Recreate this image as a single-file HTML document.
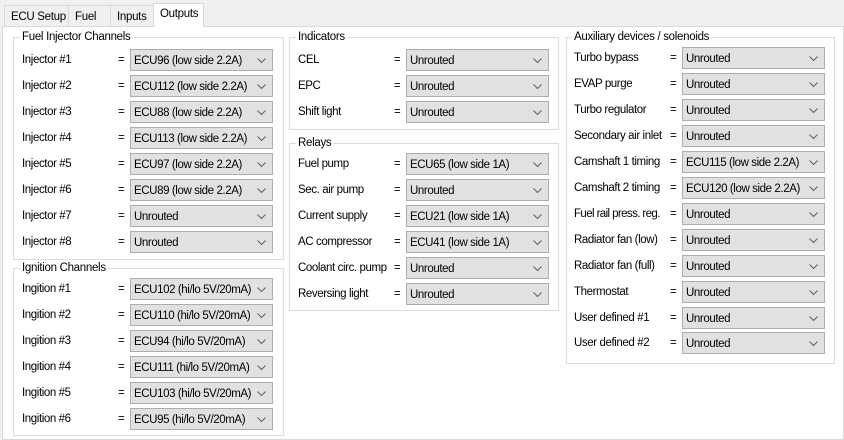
<!DOCTYPE html>
<html><head><meta charset="utf-8"><style>
*{margin:0;padding:0;box-sizing:border-box}
body{width:844px;height:440px;overflow:hidden;background:#f0f0f0;font-family:"Liberation Sans",sans-serif;font-size:11.5px;color:#000;position:relative}
.page{position:absolute;left:2px;top:26px;width:842px;height:414px;background:#fff;border:1px solid #d9d9d9}
.tab{position:absolute;top:5px;height:21px;border:1px solid #d9d9d9;border-bottom:none;background:#f0f0f0;padding:5px 0 0 6px;letter-spacing:-0.3px;white-space:nowrap}
.tab.sel{top:3px;height:24px;background:#fff;padding-top:4px}
.g{position:absolute;border:1px solid #dcdcdc}
.gt{position:absolute;background:#fff;padding:0 2px;letter-spacing:-0.3px;white-space:nowrap;margin-top:1px}
.r{position:absolute;height:22px;width:260px}
.r .l{position:absolute;left:0;top:5px;letter-spacing:-0.4px;white-space:nowrap}
.r .e{position:absolute;left:96px;top:5px}
.r .c{position:absolute;left:108px;top:0;width:143px;height:22px;background:#e1e1e1;border:1px solid #adadad;padding:5px 0 0 3px;white-space:nowrap;letter-spacing:-0.4px}
.r .c svg{position:absolute;right:6px;top:8px}
</style></head><body>
<div class="page"></div>
<div class="tab" style="left:4px;width:65px">ECU Setup</div>
<div class="tab" style="left:68px;width:43px">Fuel</div>
<div class="tab" style="left:110px;width:44px">Inputs</div>
<div class="tab sel" style="left:153px;width:51px">Outputs</div>

<div class="g" style="left:13px;top:37px;width:271px;height:223px"></div>
<div class="gt" style="left:20px;top:30px">Fuel Injector Channels</div>
<div class="g" style="left:13px;top:268px;width:271px;height:168px"></div>
<div class="gt" style="left:20px;top:261px">Ignition Channels</div>
<div class="g" style="left:289px;top:37px;width:270px;height:93px"></div>
<div class="gt" style="left:296px;top:30px">Indicators</div>
<div class="g" style="left:289px;top:143px;width:270px;height:168px"></div>
<div class="gt" style="left:296px;top:136px">Relays</div>
<div class="g" style="left:566px;top:37px;width:269px;height:327px"></div>
<div class="gt" style="left:572px;top:30px">Auxiliary devices / solenoids</div>

<div class="r" style="left:22px;top:49px"><span class="l">Injector #1</span><span class="e">=</span><div class="c">ECU96 (low side 2.2A)<svg width="9" height="6"><path d="M0.5 0.5L4.5 4.5L8.5 0.5" fill="none" stroke="#606060"/></svg></div></div>
<div class="r" style="left:22px;top:75px"><span class="l">Injector #2</span><span class="e">=</span><div class="c">ECU112 (low side 2.2A)<svg width="9" height="6"><path d="M0.5 0.5L4.5 4.5L8.5 0.5" fill="none" stroke="#606060"/></svg></div></div>
<div class="r" style="left:22px;top:101px"><span class="l">Injector #3</span><span class="e">=</span><div class="c">ECU88 (low side 2.2A)<svg width="9" height="6"><path d="M0.5 0.5L4.5 4.5L8.5 0.5" fill="none" stroke="#606060"/></svg></div></div>
<div class="r" style="left:22px;top:127px"><span class="l">Injector #4</span><span class="e">=</span><div class="c">ECU113 (low side 2.2A)<svg width="9" height="6"><path d="M0.5 0.5L4.5 4.5L8.5 0.5" fill="none" stroke="#606060"/></svg></div></div>
<div class="r" style="left:22px;top:153px"><span class="l">Injector #5</span><span class="e">=</span><div class="c">ECU97 (low side 2.2A)<svg width="9" height="6"><path d="M0.5 0.5L4.5 4.5L8.5 0.5" fill="none" stroke="#606060"/></svg></div></div>
<div class="r" style="left:22px;top:179px"><span class="l">Injector #6</span><span class="e">=</span><div class="c">ECU89 (low side 2.2A)<svg width="9" height="6"><path d="M0.5 0.5L4.5 4.5L8.5 0.5" fill="none" stroke="#606060"/></svg></div></div>
<div class="r" style="left:22px;top:205px"><span class="l">Injector #7</span><span class="e">=</span><div class="c">Unrouted<svg width="9" height="6"><path d="M0.5 0.5L4.5 4.5L8.5 0.5" fill="none" stroke="#606060"/></svg></div></div>
<div class="r" style="left:22px;top:231px"><span class="l">Injector #8</span><span class="e">=</span><div class="c">Unrouted<svg width="9" height="6"><path d="M0.5 0.5L4.5 4.5L8.5 0.5" fill="none" stroke="#606060"/></svg></div></div>

<div class="r" style="left:22px;top:278px"><span class="l">Ingition #1</span><span class="e">=</span><div class="c">ECU102 (hi/lo 5V/20mA)<svg width="9" height="6"><path d="M0.5 0.5L4.5 4.5L8.5 0.5" fill="none" stroke="#606060"/></svg></div></div>
<div class="r" style="left:22px;top:304px"><span class="l">Ingition #2</span><span class="e">=</span><div class="c">ECU110 (hi/lo 5V/20mA)<svg width="9" height="6"><path d="M0.5 0.5L4.5 4.5L8.5 0.5" fill="none" stroke="#606060"/></svg></div></div>
<div class="r" style="left:22px;top:330px"><span class="l">Ingition #3</span><span class="e">=</span><div class="c">ECU94 (hi/lo 5V/20mA)<svg width="9" height="6"><path d="M0.5 0.5L4.5 4.5L8.5 0.5" fill="none" stroke="#606060"/></svg></div></div>
<div class="r" style="left:22px;top:356px"><span class="l">Ingition #4</span><span class="e">=</span><div class="c">ECU111 (hi/lo 5V/20mA)<svg width="9" height="6"><path d="M0.5 0.5L4.5 4.5L8.5 0.5" fill="none" stroke="#606060"/></svg></div></div>
<div class="r" style="left:22px;top:382px"><span class="l">Ingition #5</span><span class="e">=</span><div class="c">ECU103 (hi/lo 5V/20mA)<svg width="9" height="6"><path d="M0.5 0.5L4.5 4.5L8.5 0.5" fill="none" stroke="#606060"/></svg></div></div>
<div class="r" style="left:22px;top:408px"><span class="l">Ingition #6</span><span class="e">=</span><div class="c">ECU95 (hi/lo 5V/20mA)<svg width="9" height="6"><path d="M0.5 0.5L4.5 4.5L8.5 0.5" fill="none" stroke="#606060"/></svg></div></div>

<div class="r" style="left:298px;top:49px"><span class="l">CEL</span><span class="e">=</span><div class="c">Unrouted<svg width="9" height="6"><path d="M0.5 0.5L4.5 4.5L8.5 0.5" fill="none" stroke="#606060"/></svg></div></div>
<div class="r" style="left:298px;top:75px"><span class="l">EPC</span><span class="e">=</span><div class="c">Unrouted<svg width="9" height="6"><path d="M0.5 0.5L4.5 4.5L8.5 0.5" fill="none" stroke="#606060"/></svg></div></div>
<div class="r" style="left:298px;top:101px"><span class="l">Shift light</span><span class="e">=</span><div class="c">Unrouted<svg width="9" height="6"><path d="M0.5 0.5L4.5 4.5L8.5 0.5" fill="none" stroke="#606060"/></svg></div></div>

<div class="r" style="left:298px;top:153px"><span class="l">Fuel pump</span><span class="e">=</span><div class="c">ECU65 (low side 1A)<svg width="9" height="6"><path d="M0.5 0.5L4.5 4.5L8.5 0.5" fill="none" stroke="#606060"/></svg></div></div>
<div class="r" style="left:298px;top:179px"><span class="l">Sec. air pump</span><span class="e">=</span><div class="c">Unrouted<svg width="9" height="6"><path d="M0.5 0.5L4.5 4.5L8.5 0.5" fill="none" stroke="#606060"/></svg></div></div>
<div class="r" style="left:298px;top:205px"><span class="l">Current supply</span><span class="e">=</span><div class="c">ECU21 (low side 1A)<svg width="9" height="6"><path d="M0.5 0.5L4.5 4.5L8.5 0.5" fill="none" stroke="#606060"/></svg></div></div>
<div class="r" style="left:298px;top:231px"><span class="l">AC compressor</span><span class="e">=</span><div class="c">ECU41 (low side 1A)<svg width="9" height="6"><path d="M0.5 0.5L4.5 4.5L8.5 0.5" fill="none" stroke="#606060"/></svg></div></div>
<div class="r" style="left:298px;top:257px"><span class="l">Coolant circ. pump</span><span class="e">=</span><div class="c">Unrouted<svg width="9" height="6"><path d="M0.5 0.5L4.5 4.5L8.5 0.5" fill="none" stroke="#606060"/></svg></div></div>
<div class="r" style="left:298px;top:283px"><span class="l">Reversing light</span><span class="e">=</span><div class="c">Unrouted<svg width="9" height="6"><path d="M0.5 0.5L4.5 4.5L8.5 0.5" fill="none" stroke="#606060"/></svg></div></div>

<div class="r" style="left:574px;top:47px"><span class="l">Turbo bypass</span><span class="e">=</span><div class="c">Unrouted<svg width="9" height="6"><path d="M0.5 0.5L4.5 4.5L8.5 0.5" fill="none" stroke="#606060"/></svg></div></div>
<div class="r" style="left:574px;top:73px"><span class="l">EVAP purge</span><span class="e">=</span><div class="c">Unrouted<svg width="9" height="6"><path d="M0.5 0.5L4.5 4.5L8.5 0.5" fill="none" stroke="#606060"/></svg></div></div>
<div class="r" style="left:574px;top:99px"><span class="l">Turbo regulator</span><span class="e">=</span><div class="c">Unrouted<svg width="9" height="6"><path d="M0.5 0.5L4.5 4.5L8.5 0.5" fill="none" stroke="#606060"/></svg></div></div>
<div class="r" style="left:574px;top:125px"><span class="l">Secondary air inlet</span><span class="e">=</span><div class="c">Unrouted<svg width="9" height="6"><path d="M0.5 0.5L4.5 4.5L8.5 0.5" fill="none" stroke="#606060"/></svg></div></div>
<div class="r" style="left:574px;top:151px"><span class="l">Camshaft 1 timing</span><span class="e">=</span><div class="c">ECU115 (low side 2.2A)<svg width="9" height="6"><path d="M0.5 0.5L4.5 4.5L8.5 0.5" fill="none" stroke="#606060"/></svg></div></div>
<div class="r" style="left:574px;top:177px"><span class="l">Camshaft 2 timing</span><span class="e">=</span><div class="c">ECU120 (low side 2.2A)<svg width="9" height="6"><path d="M0.5 0.5L4.5 4.5L8.5 0.5" fill="none" stroke="#606060"/></svg></div></div>
<div class="r" style="left:574px;top:203px"><span class="l" style="letter-spacing:-0.6px">Fuel rail press. reg.</span><span class="e">=</span><div class="c">Unrouted<svg width="9" height="6"><path d="M0.5 0.5L4.5 4.5L8.5 0.5" fill="none" stroke="#606060"/></svg></div></div>
<div class="r" style="left:574px;top:229px"><span class="l">Radiator fan (low)</span><span class="e">=</span><div class="c">Unrouted<svg width="9" height="6"><path d="M0.5 0.5L4.5 4.5L8.5 0.5" fill="none" stroke="#606060"/></svg></div></div>
<div class="r" style="left:574px;top:255px"><span class="l">Radiator fan (full)</span><span class="e">=</span><div class="c">Unrouted<svg width="9" height="6"><path d="M0.5 0.5L4.5 4.5L8.5 0.5" fill="none" stroke="#606060"/></svg></div></div>
<div class="r" style="left:574px;top:281px"><span class="l">Thermostat</span><span class="e">=</span><div class="c">Unrouted<svg width="9" height="6"><path d="M0.5 0.5L4.5 4.5L8.5 0.5" fill="none" stroke="#606060"/></svg></div></div>
<div class="r" style="left:574px;top:307px"><span class="l">User defined #1</span><span class="e">=</span><div class="c">Unrouted<svg width="9" height="6"><path d="M0.5 0.5L4.5 4.5L8.5 0.5" fill="none" stroke="#606060"/></svg></div></div>
<div class="r" style="left:574px;top:332px"><span class="l">User defined #2</span><span class="e">=</span><div class="c">Unrouted<svg width="9" height="6"><path d="M0.5 0.5L4.5 4.5L8.5 0.5" fill="none" stroke="#606060"/></svg></div></div>
</body></html>
